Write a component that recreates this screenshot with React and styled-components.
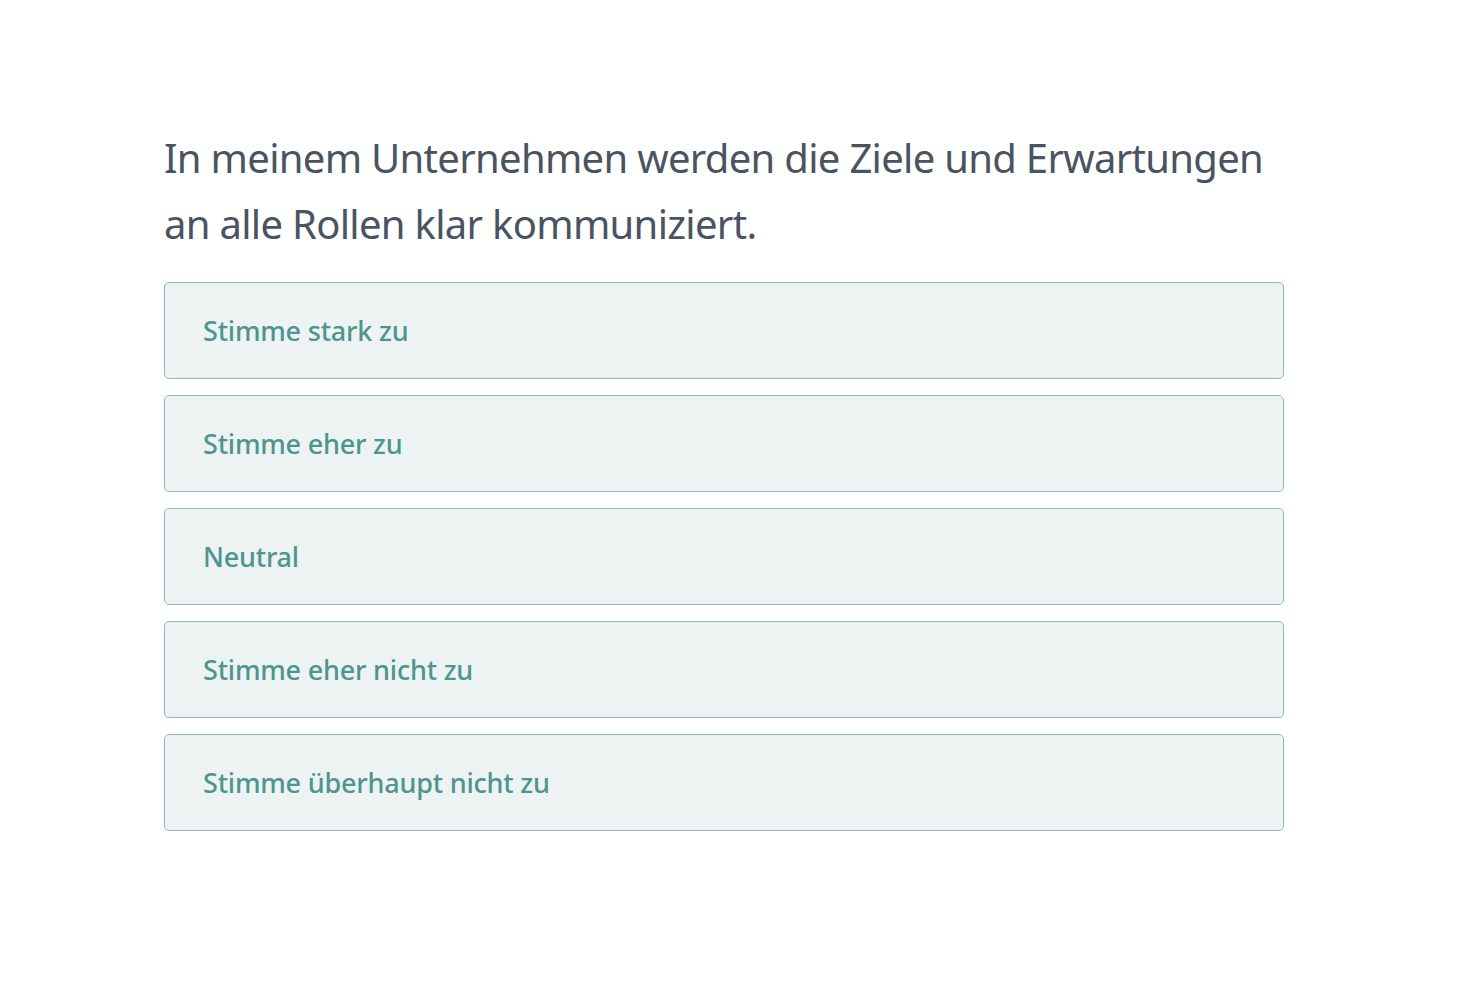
import React from 'react'
import styled, { createGlobalStyle } from 'styled-components'

const GlobalStyle = createGlobalStyle`
  body {
    margin: 0;
    background: #ffffff;
    font-family: "Noto Sans", "Open Sans", sans-serif;
  }
`;

const Page = styled.div`
  min-height: 100vh;
  padding: 125px 0 0 164px;
  box-sizing: border-box;
`;

const Survey = styled.div`
  width: 1120px;
`;

const Question = styled.h2`
  margin: 0 0 25px;
  font-size: 40px;
  font-weight: 400;
  letter-spacing: -0.7px;
  line-height: 66px;
  color: #4a5361;
`;

const Options = styled.div`
  display: flex;
  flex-direction: column;
  gap: 16px;
`;

const Option = styled.button`
  display: flex;
  align-items: center;
  height: 97px;
  padding: 0 0 0 38px;
  box-sizing: border-box;
  background: #edf3f3;
  border: 1px solid #8dbbba;
  border-radius: 5px;
  font-family: inherit;
  font-size: 27px;
  font-weight: 500;
  letter-spacing: -0.2px;
  color: #4d958f;
  text-align: left;
  cursor: pointer;
`;

const answers = [
  'Stimme stark zu',
  'Stimme eher zu',
  'Neutral',
  'Stimme eher nicht zu',
  'Stimme überhaupt nicht zu',
];

const App = () => {
  return (
    <>
      <GlobalStyle />
      <Page>
        <Survey>
          <Question>
            In meinem Unternehmen werden die Ziele und Erwartungen
            <br />
            an alle Rollen klar kommuniziert.
          </Question>
          <Options>
            {answers.map((answer) => (
              <Option key={answer}>{answer}</Option>
            ))}
          </Options>
        </Survey>
      </Page>
    </>
  )
}

export default App
